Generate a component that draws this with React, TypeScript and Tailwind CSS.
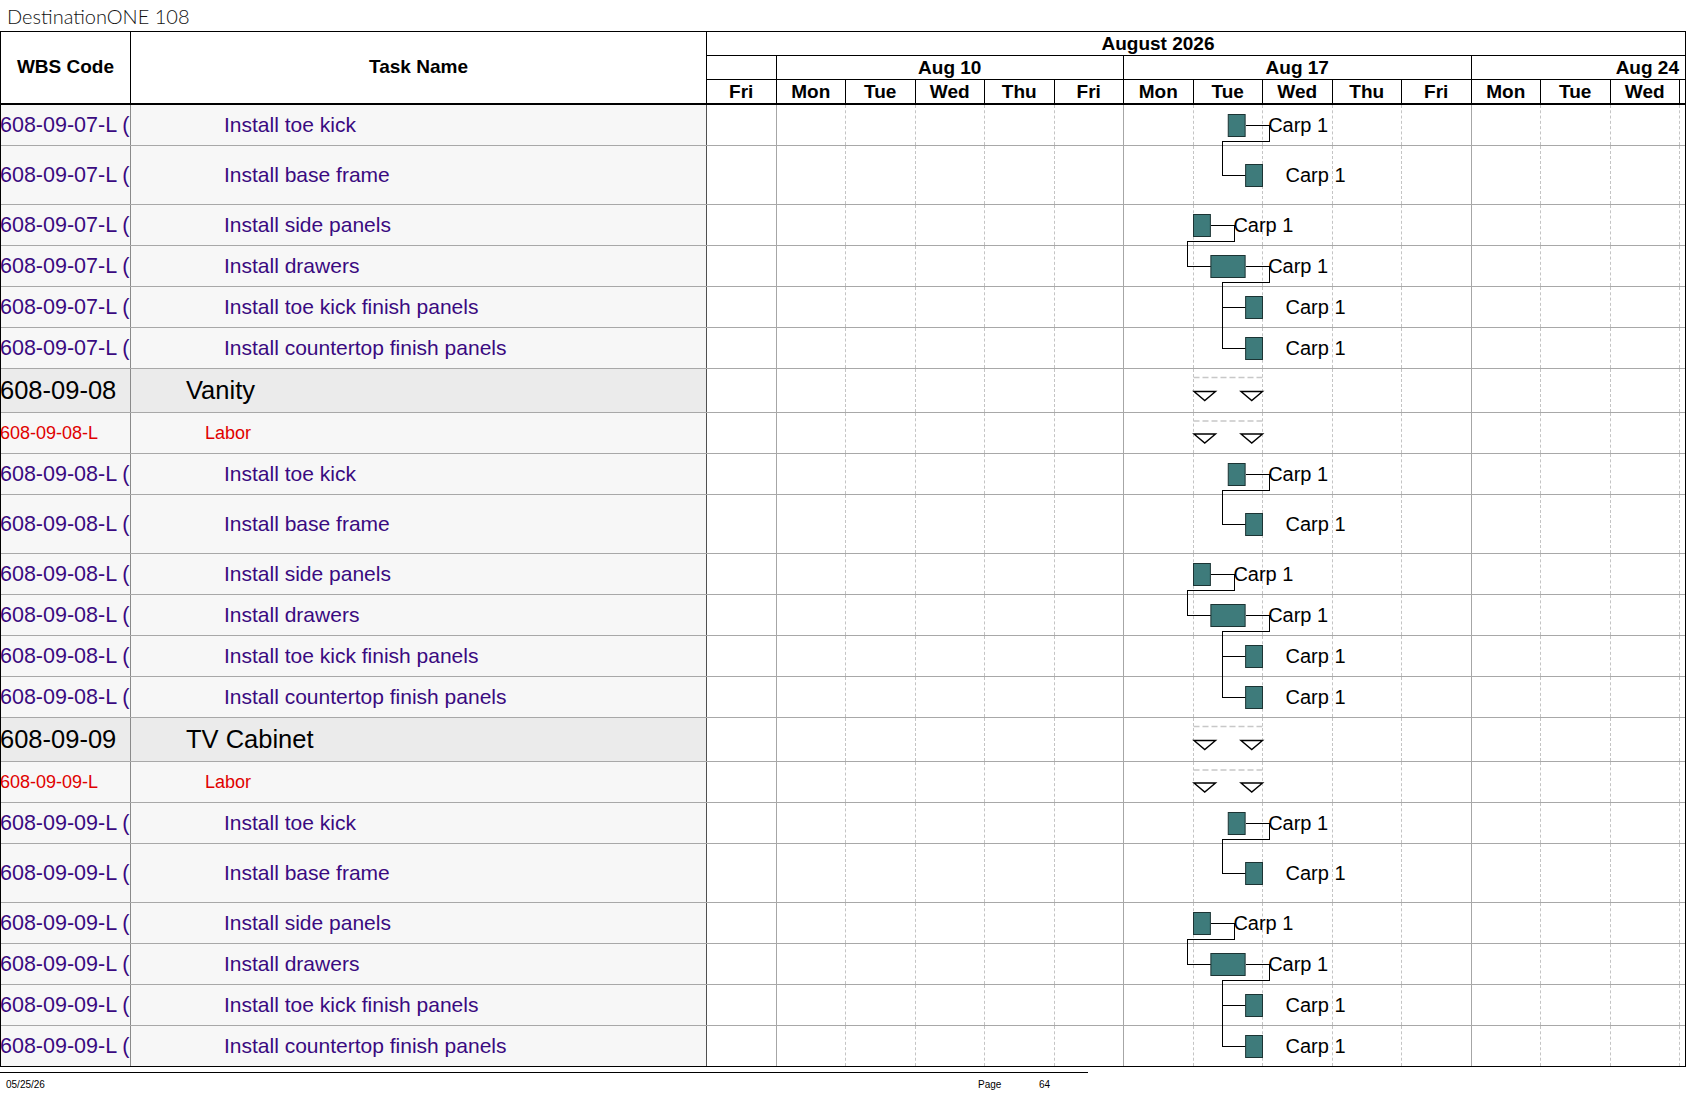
import React from "react";

const DAY = 69.5;
const GANTT_W = 980;

const days = ["Fri", "Mon", "Tue", "Wed", "Thu", "Fri", "Mon", "Tue", "Wed", "Thu", "Fri", "Mon", "Tue", "Wed"];

type Row = {
  kind: "group" | "labor" | "task";
  code: string;
  name: string;
  h: number;
  bar?: [number, number];
};

// bars are in day units from the first visible day (Fri Aug 7)
const TASKS: { name: string; h: number; bar: [number, number] }[] = [
  { name: "Install toe kick", h: 41, bar: [7.5, 7.75] },
  { name: "Install base frame", h: 59, bar: [7.75, 8] },
  { name: "Install side panels", h: 41, bar: [7, 7.25] },
  { name: "Install drawers", h: 41, bar: [7.25, 7.75] },
  { name: "Install toe kick finish panels", h: 41, bar: [7.75, 8] },
  { name: "Install countertop finish panels", h: 41, bar: [7.75, 8] },
];
const LINKS = [
  [0, 1],
  [2, 3],
  [3, 4],
  [3, 5],
];

function buildRows() {
  const rows: Row[] = [];
  const links: [number, number][] = [];
  const block = (num: string, group?: string) => {
    if (group) {
      rows.push({ kind: "group", code: `608-09-${num}`, name: group, h: 44 });
      rows.push({ kind: "labor", code: `608-09-${num}-L`, name: "Labor", h: 41 });
    }
    const base = rows.length;
    TASKS.forEach((t) => rows.push({ kind: "task", code: `608-09-${num}-L (`, name: t.name, h: t.h, bar: t.bar }));
    LINKS.forEach(([a, b]) => links.push([base + a, base + b]));
  };
  block("07");
  block("08", "Vanity");
  block("09", "TV Cabinet");
  return { rows, links };
}

const { rows, links } = buildRows();
const tops: number[] = [];
let acc = 0;
rows.forEach((r) => {
  tops.push(acc);
  acc += r.h;
});
const BODY_H = acc;
const center = (i: number) => tops[i] + (rows[i].h - 1) / 2;

function GridCells() {
  return (
    <div className="flex h-full">
      {days.map((d, i) => {
        const nextMon = i === 0 || i === 5 || i === 10;
        return (
          <div
            key={i}
            className={
              nextMon
                ? "w-[69.5px] shrink-0 border-r border-[#a6a6a6]"
                : "w-[69.5px] shrink-0 border-r border-dashed border-[#c4c4c4]"
            }
          />
        );
      })}
    </div>
  );
}

function GanttOverlay() {
  const paths: string[] = [];
  links.forEach(([p, s]) => {
    const pr = rows[p].bar!;
    const sr = rows[s].bar!;
    const x1 = pr[1] * DAY;
    const y1 = center(p);
    const xr = x1 + 23.5;
    const yb = tops[p] + rows[p].h - 5;
    const xs = sr[0] * DAY;
    const xl = xs - 23;
    const y2 = center(s);
    paths.push(`M${x1} ${y1}H${xr}V${yb}H${xl}V${y2}H${xs}`);
  });
  const tue = 7 * DAY;
  const wed = 8 * DAY;
  return (
    <div className="absolute left-[706px] top-0 pointer-events-none" style={{ width: GANTT_W, height: BODY_H }}>
      <svg width={GANTT_W} height={BODY_H} className="absolute left-0 top-0">
        {paths.map((d, i) => (
          <path key={i} d={d} fill="none" stroke="#000" strokeWidth="1" shapeRendering="crispEdges" />
        ))}
        {rows.map((r, i) => {
          const c = center(i);
          if (r.kind === "task" && r.bar) {
            return (
              <rect
                key={i}
                x={r.bar[0] * DAY}
                y={c - 10.5}
                width={(r.bar[1] - r.bar[0]) * DAY - 0.5}
                height={22}
                fill="#3e7b7b"
                stroke="#1c3434"
                strokeWidth="1"
              />
            );
          }
          const top = c + 1;
          const bot = c + 10;
          const dashY = r.kind === "group" ? c - 13 : c - 12;
          return (
            <g key={i}>
              <line x1={tue} x2={wed} y1={dashY} y2={dashY} stroke="#c8c8c8" strokeWidth="1.5" strokeDasharray="6 3" />
              <path
                d={`M${tue + 0.5} ${top}H${tue + 22}L${tue + 11.25} ${bot}Z`}
                fill="#fff"
                stroke="#000"
                strokeWidth="1.4"
              />
              <path
                d={`M${wed - 22} ${top}H${wed - 0.5}L${wed - 11.25} ${bot}Z`}
                fill="#fff"
                stroke="#000"
                strokeWidth="1.4"
              />
            </g>
          );
        })}
      </svg>
      {rows.map((r, i) =>
        r.kind === "task" && r.bar ? (
          <span
            key={i}
            className="absolute text-[20px] leading-none text-black whitespace-nowrap"
            style={{ left: r.bar[1] * DAY + 22.5, top: center(i) - 10 }}
          >
            Carp 1
          </span>
        ) : null
      )}
    </div>
  );
}

function BodyRow({ r, last }: { r: Row; last: boolean }) {
  const isGroup = r.kind === "group";
  const bg = isGroup ? "bg-[#ebebeb]" : "bg-[#f7f7f7]";
  let codeCls = "text-[21.5px] text-[#3a0a80]";
  let nameCls = "text-[21px] text-[#3a0a80] pl-[93px]";
  if (isGroup) {
    codeCls = "text-[25.5px] text-black";
    nameCls = "text-[25.5px] text-black pl-[55px]";
  } else if (r.kind === "labor") {
    codeCls = "text-[18px] text-[#e00000]";
    nameCls = "text-[18px] text-[#e00000] pl-[74px]";
  }
  return (
    <div className={`flex border-b box-border ${last ? "border-black" : "border-[#a8a8a8]"}`} style={{ height: r.h }}>
      <div className={`w-[130px] shrink-0 overflow-hidden whitespace-nowrap border-r border-[#8a8a8a] flex items-center ${bg}`}>
        <span className={`-ml-[1px] ${codeCls}`}>{r.code}</span>
      </div>
      <div className={`w-[576px] shrink-0 whitespace-nowrap border-r border-[#505050] flex items-center ${bg}`}>
        <span className={nameCls}>{r.name}</span>
      </div>
      <div className="flex-1 bg-white">
        <GridCells />
      </div>
    </div>
  );
}

export default function App() {
  return (
    <div className="w-[1687px] h-[1097px] bg-white overflow-hidden" style={{ fontFamily: '"Liberation Sans", Arial, sans-serif' }}>
      <div className="h-[31px] flex items-center pl-[7px] text-[20px] text-[#111] font-light" style={{ fontFamily: 'Lato, "Open Sans", sans-serif' }}>
        DestinationONE 108
      </div>

      <div className="w-[1686px] border-l border-r border-black">
        {/* header */}
        <div className="flex h-[74px] border-t border-b-2 border-black box-border text-[19px] font-bold text-black">
          <div className="w-[130px] shrink-0 border-r border-black flex items-center justify-center">WBS Code</div>
          <div className="w-[576px] shrink-0 border-r border-black flex items-center justify-center">Task Name</div>
          <div className="flex-1 flex flex-col">
            <div className="h-[24px] border-b border-black flex items-center">
              <div className="w-[902px] text-center leading-none">August 2026</div>
            </div>
            <div className="h-[24px] border-b border-black flex">
              <div className="w-[69.5px] shrink-0 border-r border-black" />
              <div className="w-[347.5px] shrink-0 border-r border-black flex items-center justify-center leading-none">Aug 10</div>
              <div className="w-[347.5px] shrink-0 border-r border-black flex items-center justify-center leading-none">Aug 17</div>
              <div className="flex-1 flex items-center justify-end pr-[6px] leading-none">Aug 24</div>
            </div>
            <div className="flex-1 flex">
              {days.map((d, i) => (
                <div key={i} className="w-[69.5px] shrink-0 border-r border-black flex items-center justify-center leading-none">
                  {d}
                </div>
              ))}
            </div>
          </div>
        </div>

        {/* body */}
        <div className="relative">
          {rows.map((r, i) => (
            <BodyRow key={i} r={r} last={i === rows.length - 1} />
          ))}
          <GanttOverlay />
        </div>
      </div>

      {/* footer */}
      <div className="mt-[5px] w-[1088px] border-t border-black" />
      <div className="flex items-center h-[22px] text-[10px] text-black">
        <div className="w-[978px] pl-[6px]">05/25/26</div>
        <div className="w-[61px]">Page</div>
        <div>64</div>
      </div>
    </div>
  );
}
